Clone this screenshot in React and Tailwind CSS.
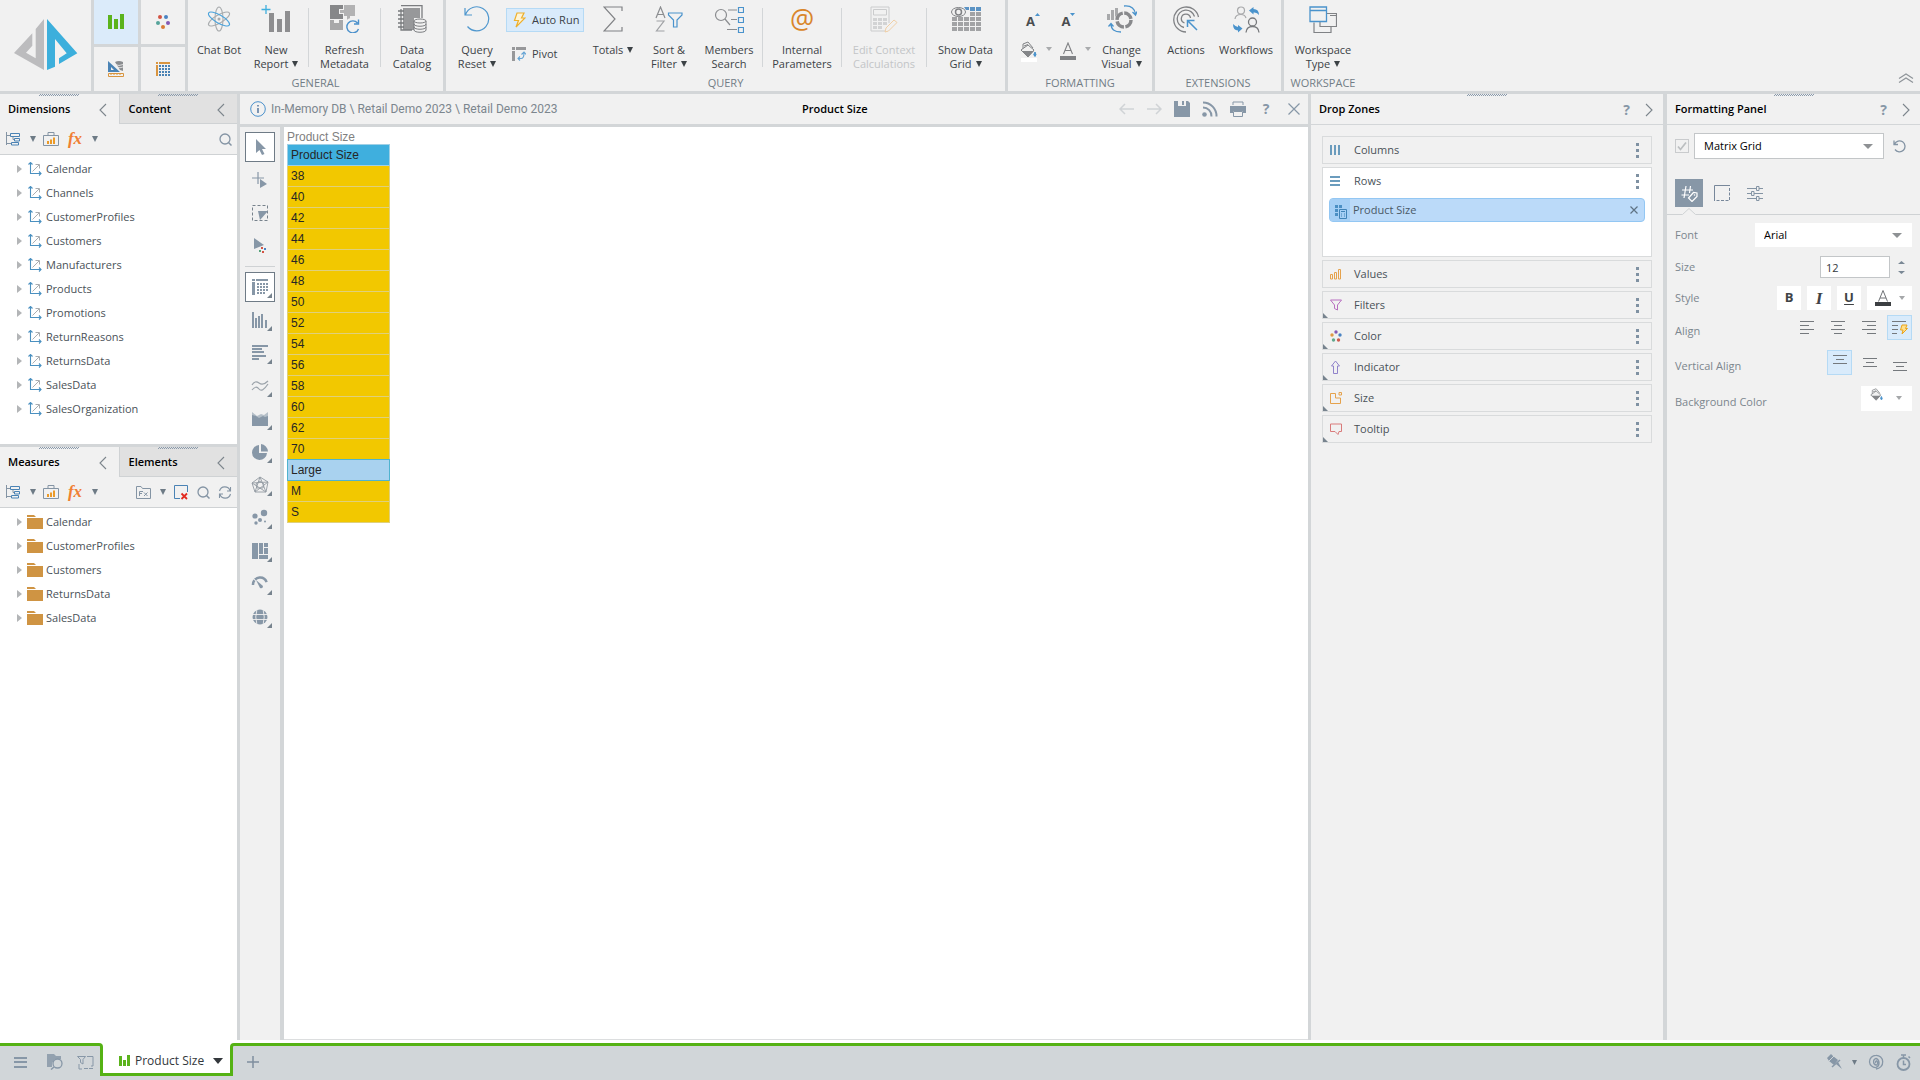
import React from 'react';

const dimensions = [
    'Calendar', 'Channels', 'CustomerProfiles', 'Customers', 'Manufacturers', 'Products',
    'Promotions', 'ReturnReasons', 'ReturnsData', 'SalesData', 'SalesOrganization',
];
const measures = ['Calendar', 'CustomerProfiles', 'Customers', 'ReturnsData', 'SalesData'];
const sizes = ['38', '40', '42', '44', '46', '48', '50', '52', '54', '56', '58', '60', '62', '70', 'Large', 'M', 'S'];

/* ---------- small shared pieces ---------- */

const Svg = ({ w = 16, h = w, vb, className = '', children, ...rest }) => (
    <svg width={w} height={h} viewBox={vb || `0 0 ${w} ${h}`} fill="none" className={`shrink-0 ${className}`} aria-hidden="true" {...rest}>
        {children}
    </svg>
);

const Caret = ({ w = 7, h = 5, className = '' }) => (
    <Svg w={w} h={h} vb="0 0 8 6" className={className} preserveAspectRatio="none">
        <path d="M0 0H8L4 6Z" fill="currentColor" />
    </Svg>
);

const Grip = () => (
    <div className="absolute top-0 left-1/2 -translate-x-1/2 w-10 h-[2px] bg-[repeating-conic-gradient(#8a9aab_0_25%,transparent_0_50%)] bg-[length:2px_2px]"></div>
);

const Chevron = ({ right }) => (
    <Svg w={8} h={14}>
        <path d={right ? 'M1 1L7 7L1 13' : 'M7 1L1 7L7 13'} stroke="#7c858c" strokeWidth="1.1" />
    </Svg>
);

const Sep = () => <div className="w-px h-[59px] mt-2 bg-[#d3d6d8]"></div>;

const RibbonItem = ({ icon, lines, caret, width, disabled }) => (
    <button disabled={disabled} className={`${width} flex flex-col items-center pt-[5px] ${disabled ? 'text-[#c3c5c7]' : 'text-[#3c4246]'}`}>
        <span className="h-7 mb-[10px] flex items-center justify-center">{icon}</span>
        {lines.map((l, i) => (
            <span key={l} className="text-[11px] leading-[14px] whitespace-nowrap">
                {l}
                {caret && i === lines.length - 1 && <Caret w={6} h={6} className="inline-block ml-1 align-[1px]" />}
            </span>
        ))}
    </button>
);

const RibbonGroup = ({ label, width, pad = '', children }) => (
    <section className={`${width} flex flex-col h-[91px] shrink-0`}>
        <div className={`flex h-[76px] ${pad}`}>{children}</div>
        <h2 className="text-[11px] leading-[14px] text-center text-[#727d86]">{label}</h2>
    </section>
);

/* ---------- ribbon icons ---------- */

const ChatBotIcon = () => (
    <Svg w={26}>
        <g strokeWidth="1.1">
            <ellipse cx="13" cy="13" rx="4" ry="12" stroke="#a9acae" />
            <ellipse cx="13" cy="13" rx="4" ry="12" stroke="#a9acae" transform="rotate(60 13 13)" />
            <ellipse cx="13" cy="13" rx="4" ry="12" stroke="#4aa3dc" transform="rotate(-60 13 13)" />
        </g>
        <circle cx="13" cy="13" r="1.5" fill="#a9acae" />
    </Svg>
);

const NewReportIcon = () => (
    <Svg w={30} h={28}>
        <path d="M5 0V9M0.500 4.500H9.500" stroke="#3fafde" strokeWidth="1.300" />
        <path d="M8 8H13V27H8ZM16 14H21V27H16ZM24 6H29V27H24Z" fill="#8e8e90" />
    </Svg>
);

const RefreshIcon = () => (
    <Svg w={30} h={28}>
        <path d="M0 0H13V4H9V9H13V14H0Z" fill="#868789" />
        <path d="M14 0H25V11H20V15H17V11H14V8H10V5H14Z" fill="#b2b2b3" />
        <path d="M0 15H4V18H9V15H13V25H0Z" fill="#a8a8a9" />
        <circle cx="22" cy="21" r="8" fill="#f1f1f1" />
        <path d="M27.500 18A6 6 0 1 0 28.500 24M28.500 14.500V19H24" stroke="#4a90cb" strokeWidth="1.400" />
    </Svg>
);

const CatalogIcon = () => (
    <Svg w={29} h={28}>
        <path d="M5 3H22V13H16V25H5Z" fill="#97989a" />
        <path d="M3 0.500H24V13M3 4V25H14" stroke="#7b7d80" strokeWidth="1.300" />
        <path d="M0 6H6M0 10H6M0 14H6M0 18H6M0 22H6" stroke="#77797c" strokeWidth="1.300" />
        <path d="M16 16V25C16 28 28 28 28 25V16M16 19C16 22 28 22 28 19M16 22C16 25 28 25 28 22" stroke="#7b7d80" fill="#f1f1f1" />
        <ellipse cx="22" cy="16" rx="6" ry="2" stroke="#7b7d80" fill="#f1f1f1" />
    </Svg>
);

const ResetIcon = () => (
    <Svg w={26}>
        <path d="M1 2V9H8M1.500 8.500A12 12 0 1 1 3.500 20.500" stroke="#4f97ce" strokeWidth="1.200" />
    </Svg>
);

const Bolt = ({ w = 13, h = 16 }) => (
    <Svg w={w} h={h} vb="0 0 13 16">
        <path d="M4 1H11L8.500 6H12L3 15L5.500 8.500H1.500Z" stroke="#eeb02c" strokeWidth="1.200" fill="#fff4d4" />
    </Svg>
);

const PivotIcon = () => (
    <Svg w={14}>
        <path d="M0 0H3V3H0ZM4 0H14V3H4ZM0 4H3V14H0Z" fill="#97989a" />
        <path d="M6 11.500H9Q12 11.500 12 6M9.500 7.500L12 5L14 7.500M8 9.500L6 11.500L8 13.500" stroke="#63a3d4" strokeWidth="1.100" />
    </Svg>
);

const SumIcon = () => (
    <Svg w={20} h={26}>
        <path d="M19 5V1H1L12 13L1 25H19V21" stroke="#808285" strokeWidth="1.200" />
    </Svg>
);

const SortIcon = () => (
    <Svg w={28} h={26}>
        <path d="M1 12L5.500 1L10 12M2.500 8.500H8.500" stroke="#8b8d90" strokeWidth="1.200" />
        <path d="M1.500 15H9L1.500 25H9.500" stroke="#a0a2a5" strokeWidth="1.200" />
        <path d="M13.500 7H27V9L22 14V21H18.500V14L13.500 9Z" stroke="#4a93cc" strokeWidth="1.200" />
    </Svg>
);

const MembersIcon = () => (
    <Svg w={30} h={27}>
        <circle cx="7" cy="9" r="5.500" stroke="#8b8d90" strokeWidth="1.200" />
        <path d="M11 13L16 19M14 4H23M17 13.500H23M13 23.500H23" stroke="#8b8d90" strokeWidth="1.200" />
        <path d="M24.500 1.500H29.500V6.500H24.500ZM24.500 11.500H29.500V16.500H24.500ZM24.500 21.500H29.500V26.500H24.500Z" stroke="#4a93cc" strokeWidth="1.200" />
    </Svg>
);

const CalcIcon = () => (
    <Svg w={28} h={27}>
        <path d="M18 25H1V1H19V17" stroke="#cbcccd" />
        <path d="M3.500 3.500H16.500V9H3.500Z" stroke="#cbcccd" />
        <path d="M3 12H7V15H3ZM8 12H12V15H8ZM13 12H17V15H13ZM3 16H7V19H3ZM8 16H12V19H8ZM13 16H17V19H13ZM3 20H7V23H3ZM8 20H12V23H8Z" fill="#d2d3d4" />
        <path d="M15 26L16 22L24 14L27 16.500L18.500 25Z" stroke="#f0cfa6" fill="#f1f1f1" />
    </Svg>
);

const DataGridIcon = () => (
    <Svg w={30} h={26}>
        {[0, 1, 2, 3, 4].map(r => [0, 1, 2, 3, 4].map(col => (
            (r > 1 || col > 2) && <rect key={`${r}${col}`} x={col * 6 + 1} y={r * 5 + 1} width="5" height="4" fill={r === 0 ? '#5b93c4' : '#a2a3a5'} />
        )))}
        <path d="M13 1H18V4H15Z" fill="#5b93c4" />
        <ellipse cx="7.500" cy="6" rx="7" ry="4.500" stroke="#808285" fill="#f1f1f1" />
        <circle cx="7.500" cy="6" r="3" stroke="#808285" strokeWidth="1.500" />
    </Svg>
);

const ChangeVisualIcon = () => (
    <Svg w={30} h={28}>
        <path d="M0 9H3V15H0ZM4 5H7V15H4ZM8 3H11V9L8 12Z" fill="#a8a9ab" />
        <circle cx="17" cy="15" r="7" stroke="#88898c" strokeWidth="3.500" strokeDasharray="9.500 1.500" />
        <path d="M17 1Q27 0 28.500 9M25.500 7L28.500 10L30 6.500M14 27Q4 27 4 19M1.500 21.500L4 18.500L6.500 21.500" stroke="#4a93cc" strokeWidth="1.300" />
    </Svg>
);

const ActionsIcon = () => (
    <Svg w={27}>
        <path d="M13 26A12.500 12.500 0 1 1 25.500 11M11 21.500A8.800 8.800 0 1 1 21.500 10.500M11.500 17A4.600 4.600 0 1 1 17.500 12" stroke="#808285" strokeWidth="1.300" />
        <path d="M24 24L15 15M14.500 21V14.500H21.500" stroke="#4a93cc" strokeWidth="1.500" />
    </Svg>
);

const WorkflowsIcon = () => (
    <Svg w={27} h={27}>
        <circle cx="8" cy="4.500" r="3.500" stroke="#a8a9ab" strokeWidth="1.200" />
        <path d="M2 13Q2.500 8.500 8 8.500Q12 8.500 13 12" stroke="#a8a9ab" strokeWidth="1.200" />
        <circle cx="19.500" cy="16" r="4" stroke="#77797c" strokeWidth="1.300" />
        <path d="M13 26.500Q13.500 20.500 19.500 20.500Q25.500 20.500 26 26.500" stroke="#77797c" strokeWidth="1.300" />
        <path d="M16 4.500L20.500 1V3Q26 3 26 9Q24 6 20.500 6.500V8.500ZM9.500 22.500L5 19V21Q3 21 0 18Q0 24.500 5 24.500V26.500Z" fill="#4a93cc" />
    </Svg>
);

const WorkspaceIcon = () => (
    <Svg w={28} h={27}>
        <path d="M18 7.500H27.500V20.500H11V16M21 9.500H27M5 16.500V26.500H22V21" stroke="#808285" strokeWidth="1.200" />
        <path d="M1 1H17.500V15.500H1ZM1 4.500H17.500" stroke="#4a93cc" strokeWidth="1.300" />
    </Svg>
);

const BucketIcon = ({ w = 17, h = 17 }) => (
    <Svg w={w} h={h} vb="0 0 17 17">
        <path d="M3 8V3L8 1L13 7M4 5L8 3.500" stroke="#808285" />
        <path d="M1 9L8 4L14 9L8 16Z" stroke="#808285" fill="#f1f1f1" />
        <path d="M2 10H14L8 16Z" fill="#85878a" />
        <path d="M15 11Q17 14 15 15.500Q12.500 14 15 11" fill="#4a93cc" stroke="#4a93cc" />
    </Svg>
);

/* ---------- ribbon ---------- */

const Ribbon = () => (
    <header className="flex shrink-0 bg-[#f1f1f1] border-b-[3px] border-[#d3d6d8]">
        <div className="w-[94px] h-[91px] shrink-0 border-r-[3px] border-[#d3d6d8] flex items-start pl-[13px] pt-[18px]">
            <Svg w={65} h={53}>
                <path d="M31 1L22.700 11V40.300L13 34.700L19.300 27.700V15.300L1 35L31 52Z" fill="#bcbcbe" />
                <path d="M34 1L64.300 35.300L46 46V40.300L53.700 35.300L42 21V48.700L34 52Z" fill="#3cafdc" />
            </Svg>
        </div>
        <nav className="grid grid-cols-[44px_44px] grid-rows-[44px_44px] gap-[3px] bg-[#d3d6d8] border-r-[3px] border-[#d3d6d8] shrink-0">
            <button aria-label="Discover" className="bg-[#dbebfa] flex items-center justify-center">
                <Svg w={16}><path d="M0 1H4V15H0ZM6 5H10V15H6ZM12 0H16V15H12Z" fill="#5bb31c" /></Svg>
            </button>
            <button aria-label="Present" className="bg-[#f1f1f1] flex items-center justify-center">
                <Svg w={14}>
                    <circle cx="4" cy="2" r="2" fill="#d35444" /><circle cx="10" cy="2" r="2" fill="#4a83c3" />
                    <circle cx="2" cy="8" r="2" fill="#56a39a" /><circle cx="12" cy="8" r="2" fill="#8459b5" />
                    <circle cx="7" cy="12" r="2" fill="#d97b35" />
                </Svg>
            </button>
            <button aria-label="Model" className="bg-[#f1f1f1] flex items-center justify-center">
                <Svg w={16}>
                    <path d="M0 0V11H12ZM3 6L6 9H3Z" fill="#4a83b5" fillRule="evenodd" />
                    <path d="M7 1Q11 -1 15 1V10L12 9Z" fill="#8a8c8f" />
                    <path d="M7 3.500Q11 5.500 15 3.500M9 6Q12 7.500 15 6" stroke="#f1f1f1" strokeWidth="0.800" />
                    <path d="M0.500 12.500H15.500V15.500H0.500ZM3 12V14M6 12V14M9 12V14M12 12V14" stroke="#d9953f" />
                </Svg>
            </button>
            <button aria-label="Tabulate" className="bg-[#f1f1f1] flex items-center justify-center">
                <Svg w={14}>
                    <path d="M0 0H2V2H0ZM3 0H14V2H3ZM0 3H2V14H0Z" fill="#d9953f" />
                    {[3, 6, 9, 12].map(x => [3, 6, 9, 12].map(y => <rect key={`${x}-${y}`} x={x} y={y} width="2" height="2" fill="#4a83b5" />))}
                </Svg>
            </button>
        </nav>

        <div className="flex flex-1 divide-x-[3px] divide-[#d3d6d8]">
            <RibbonGroup label="GENERAL" width="w-[258px]" pad="pl-[6px]">
                <RibbonItem width="w-[50px]" icon={<ChatBotIcon />} lines={['Chat Bot']} />
                <RibbonItem width="w-16" icon={<NewReportIcon />} lines={['New', 'Report']} caret />
                <Sep />
                <RibbonItem width="w-[71px]" icon={<RefreshIcon />} lines={['Refresh', 'Metadata']} />
                <Sep />
                <RibbonItem width="w-[62px]" icon={<CatalogIcon />} lines={['Data', 'Catalog']} />
            </RibbonGroup>
            <RibbonGroup label="QUERY" width="w-[562px]" pad="pl-1">
                <RibbonItem width="w-[54px]" icon={<ResetIcon />} lines={['Query', 'Reset']} caret />
                <div className="w-[78px] ml-[2px] pt-2 flex flex-col gap-[10px] text-[11px] text-[#3c4246]">
                    <button className="h-6 flex items-center gap-[6px] pl-[6px] bg-[#d9ebfb] border border-[#b5daf5] whitespace-nowrap"><Bolt />Auto Run</button>
                    <button className="h-6 flex items-center gap-[6px] pl-[6px]"><PivotIcon />Pivot</button>
                </div>
                <RibbonItem width="w-[58px]" icon={<SumIcon />} lines={['Totals']} caret />
                <RibbonItem width="w-[54px]" icon={<SortIcon />} lines={['Sort &', 'Filter']} caret />
                <RibbonItem width="w-[66px]" icon={<MembersIcon />} lines={['Members', 'Search']} />
                <Sep />
                <RibbonItem width="w-[78px]" icon={<span className="text-[27px] leading-7 text-[#d9862b]">@</span>} lines={['Internal', 'Parameters']} />
                <Sep />
                <RibbonItem width="w-[84px]" icon={<CalcIcon />} lines={['Edit Context', 'Calculations']} disabled />
                <Sep />
                <RibbonItem width="w-[77px]" icon={<DataGridIcon />} lines={['Show Data', 'Grid']} caret />
            </RibbonGroup>
            <RibbonGroup label="FORMATTING" width="w-[147px]">
                <div className="grid grid-cols-2 w-[83px] pl-3 pt-[7px] content-start text-[#4a4d50]">
                    <button aria-label="Increase font" className="h-7 flex items-start pl-[6px] pt-1">
                        <b className="text-[13px] leading-5">A</b>
                        <Svg w={5} h={5} className="mt-[2px]"><path d="M0 3L2.500 0L5 3Z" fill="#4a93cc" /></Svg>
                    </button>
                    <button aria-label="Decrease font" className="h-7 flex items-start pl-[6px] pt-1">
                        <b className="text-[13px] leading-5">A</b>
                        <Svg w={5} h={5} className="mt-[2px]"><path d="M0 0L2.500 3L5 0Z" fill="#4a93cc" /></Svg>
                    </button>
                    <button aria-label="Fill color" className="h-7 flex items-center gap-[9px] text-[#a9abad]">
                        <span className="flex flex-col items-center pt-1"><BucketIcon /><i className="w-4 h-1 bg-white"></i></span>
                        <Caret w={6} h={4} />
                    </button>
                    <button aria-label="Text color" className="h-7 flex items-center justify-end gap-[9px] text-[#a9abad]">
                        <span className="flex flex-col items-center pt-1 text-[#808285]">
                            <Svg w={12} h={14}><path d="M1.500 12L6 1L10.500 12M3 8.500H9" stroke="currentColor" strokeWidth="1.100" /></Svg>
                            <i className="w-4 h-1 bg-[#808285]"></i>
                        </span>
                        <Caret w={6} h={4} />
                    </button>
                </div>
                <RibbonItem width="w-[61px]" icon={<ChangeVisualIcon />} lines={['Change', 'Visual']} caret />
            </RibbonGroup>
            <RibbonGroup label="EXTENSIONS" width="w-[129px]">
                <RibbonItem width="w-[62px]" icon={<ActionsIcon />} lines={['Actions']} />
                <RibbonItem width="w-[58px]" icon={<WorkflowsIcon />} lines={['Workflows']} />
            </RibbonGroup>
            <RibbonGroup label="WORKSPACE" width="w-[78px]">
                <RibbonItem width="w-[78px]" icon={<WorkspaceIcon />} lines={['Workspace', 'Type']} caret />
            </RibbonGroup>
        </div>
        <button aria-label="Collapse ribbon" className="self-end mr-[6px] mb-2">
            <Svg w={16} h={10}><path d="M1 5.500L8 1L15 5.500M1 9.500L8 5L15 9.500" stroke="#8e9499" strokeWidth="1.200" /></Svg>
        </button>
    </header>
);

/* ---------- left panels ---------- */

const SearchIcon = () => (
    <Svg w={13}>
        <circle cx="6" cy="6" r="5" stroke="#8494a4" strokeWidth="1.300" />
        <path d="M9.500 9.500L12.500 12.500" stroke="#8494a4" strokeWidth="1.500" />
    </Svg>
);

const TreeTools = () => (
    <>
        <button aria-label="Hierarchies">
            <Svg w={14}>
                <path d="M0.500 0V13M0.500 3.500H5M0.500 11.500H5M7 5V7.500H8" stroke="#8494a4" />
                <path d="M4.500 1.500H13.500V4.500H4.500ZM8.500 6.500H13.500V9H8.500ZM5.500 10.500H12.500V13H5.500Z" stroke="#4a83b5" />
            </Svg>
        </button>
        <Caret w={6} h={6} className="ml-[10px] text-[#6e7b86]" />
        <button aria-label="Insert" className="ml-[7px]">
            <Svg w={16} h={14}>
                <path d="M0.500 3.500H15.500V13.500H0.500ZM5 3V0.500H11V3" stroke="#8494a4" />
                <path d="M4 9H6V12H4ZM7 7.500H9V12H7ZM10 5.500H12V12H10Z" fill="#eb9a28" />
            </Svg>
        </button>
        <button aria-label="Formula" className="ml-2 w-4 font-['Liberation_Serif',serif] italic font-bold text-[17px] leading-6 text-[#f08033]">fx</button>
        <Caret w={6} h={6} className="ml-[9px] text-[#6e7b86]" />
    </>
);

const TreePanel = ({ title, other, items, icon, tools, className }) => (
    <section className={`flex flex-col min-h-0 ${className}`}>
        <div className="grid grid-cols-2 h-[30px] bg-[#f1f1f1] text-[11px] text-black">
            <div className="relative flex items-center justify-between pt-px pl-2 pr-3 font-semibold">
                <Grip />{title}<button aria-label={`Collapse ${title}`}><Chevron /></button>
            </div>
            <div className="relative flex items-center justify-between pt-[2px] pl-[9px] pr-3 font-semibold bg-[#e1e1e1] border-l border-b border-[#cfd2d4]">
                <Grip />{other}<button aria-label={`Collapse ${other}`}><Chevron /></button>
            </div>
        </div>
        <div className="flex items-center h-[31px] pl-[6px] pr-[5px] bg-[#f1f1f1] border-b border-[#cfd2d4]">
            <TreeTools />
            <div className="flex items-center ml-auto">
                {tools}
                {!tools && <button aria-label="Search"><SearchIcon /></button>}
            </div>
        </div>
        <ul className="py-[2px]">
            {items.map(name => (
                <li key={name}>
                    <button className="flex items-center h-6 w-full pl-[17px] text-[11px] text-[#4a5258]">
                        <Svg w={5} h={8}><path d="M0 0L5 4L0 8Z" fill="#b3b5b7" /></Svg>
                        <span className="w-6 flex justify-center pl-[2px] pb-px">{icon}</span>
                        {name}
                    </button>
                </li>
            ))}
        </ul>
    </section>
);

const AxisIcon = () => (
    <Svg w={14}>
        <path d="M2.500 0.500V11.500H13M0.500 2.500L2.500 0.500L4.500 2.500M11 9.500L13 11.500L11 13.500" stroke="#4a90c0" strokeWidth="1.100" />
        <path d="M4.500 9.500L11 3M7.500 2.500H11.500V6.500" stroke="#aaadb0" />
    </Svg>
);

const FolderIcon = () => (
    <Svg w={16} h={14} className="mt-px"><path d="M0 0H7L9 2H0ZM0 3H16V14H0Z" fill="#cf9443" /></Svg>
);

const measureTools = (
    <>
        <button aria-label="Folder functions">
            <Svg w={15} h={13}>
                <path d="M0.500 12.500V0.500H5L6.500 2.500H14.500V12.500ZM3.500 10V5.500H7M3.500 7.500H6M8 6.500L11.500 10M11.500 6.500L8 10" stroke="#8494a4" />
            </Svg>
        </button>
        <Caret w={6} h={6} className="ml-[9px] text-[#6e7b86]" />
        <button aria-label="Clear" className="ml-2">
            <Svg w={14} h={15}>
                <path d="M6 13.500H0.500V0.500H13.500V7" stroke="#4a83b5" />
                <path d="M7.500 8.500L13 14M13 8.500L7.500 14" stroke="#e22b20" strokeWidth="1.800" />
            </Svg>
        </button>
        <button aria-label="Search" className="ml-[9px]"><SearchIcon /></button>
        <button aria-label="Refresh" className="ml-2">
            <Svg w={14} h={13}>
                <path d="M1.500 5A5.500 5.500 0 0 1 12 4.500M12.500 8A5.500 5.500 0 0 1 2 8.500M12.500 1V5H9M1.500 12V8H5" stroke="#8494a4" strokeWidth="1.100" />
            </Svg>
        </button>
    </>
);

/* ---------- center ---------- */

const c = '#8797a7';
const tools = [
    { name: 'Pointer', on: true, icon: <path d="M5 1L15 11H11L13.500 16L11 17L8.500 12L5 15Z" fill={c} /> },
    { name: 'Cross select', icon: <><path d="M7 1V13M1 7H13" stroke={c} strokeWidth="1.200" /><path d="M9 8L16 13L9 17Z" fill={c} /></> },
    { name: 'Lasso', icon: <><path d="M1.500 1.500H16.500V16.500H1.500Z" stroke="#77828c" strokeDasharray="3 2" /><path d="M7 7H17L9 16Z" fill={c} /></> },
    { name: 'Point select', icon: <><path d="M3 1L13 8L3 12Z" fill={c} /><path d="M10 10H12V12H10ZM11 14H13V16H11Z" fill="#d35444" /><path d="M13 11H15V13H13Z" fill="#4a83c3" /><path d="M8 13H10V15H8Z" fill="#56a37a" /></>, line: true },
    { name: 'Grid', on: true, more: true, icon: <path d="M1 1H4V3H1ZM5 1H17V3H5ZM1 4H4V17H1Z M6 5h2v2h-2zM9 5h2v2h-2zM12 5h2v2h-2zM15 5h2v2h-2zM6 8h2v2h-2zM9 8h2v2h-2zM12 8h2v2h-2zM15 8h2v2h-2zM6 11h2v2h-2zM9 11h2v2h-2zM12 11h2v2h-2zM15 11h2v2h-2zM6 14h2v2h-2zM9 14h2v2h-2zM12 14h2v2h-2z" fill={c} /> },
    { name: 'Column chart', more: true, icon: <path d="M1 1H3V17H1ZM4 7H6V17H4ZM7 5H9V17H7ZM10 3H12V17H10ZM14 9H16V17H14Z" fill={c} /> },
    { name: 'Bar chart', more: true, icon: <path d="M1 1H17V3H1ZM1 4H11V6H1ZM1 7H13V9H1ZM1 11H15V13H1ZM1 14H8V16H1Z" fill={c} /> },
    { name: 'Line chart', more: true, icon: <path d="M1 8Q4 3 8 6T17 4M1 13Q5 8 8 12T17 7" stroke="#9ba3aa" strokeWidth="1.200" /> },
    { name: 'Area chart', more: true, icon: <><path d="M1 2L6 6L10 4L13 5L17 2V10H1Z" fill="#b5bfc8" /><path d="M1 5L5 6L8 8L12 6L14 7L17 6V16H1Z" fill={c} /></> },
    { name: 'Pie chart', more: true, icon: <path d="M8 2A7.500 7.500 0 1 0 16 10H8ZM10 1A8 8 0 0 1 17 8.500H10Z" fill={c} /> },
    { name: 'Radar', more: true, icon: <path d="M9 1L17 6L15 16H4L1 7ZM9 1L4 16M9 1L15 16M1 7L15 16M17 6L4 16M1 7L17 6M9 5L13 8L12 12H6L5 8Z" stroke="#939ba3" strokeWidth="0.900" /> },
    { name: 'Scatter', more: true, icon: <g fill={c}><circle cx="13" cy="4" r="3.200" /><circle cx="4" cy="7" r="2.600" /><circle cx="9" cy="11" r="2" /><circle cx="5" cy="14" r="1.700" /><circle cx="14" cy="12.500" r="1" /></g> },
    { name: 'Treemap', more: true, icon: <path d="M1 1H7V17H1ZM8 1H12V12H8ZM13 1H17V5H13ZM13 6H17V12H13ZM8 13H17V17H8Z" fill={c} /> },
    { name: 'Gauge', more: true, icon: <><path d="M2 10A7 7 0 0 1 16 9" stroke={c} strokeWidth="2.500" strokeDasharray="5 1 14" /><path d="M5 5L12 11Q12 14 9 13Z" fill={c} /></> },
    { name: 'Map', more: true, icon: <><circle cx="9" cy="9" r="7.500" fill={c} /><path d="M1 6.500H17M1 11.500H17M6 1Q3.500 9 6 17M12 1Q14.500 9 12 17" stroke="#f1f1f1" strokeWidth="0.900" /></> },
];

const ToolStrip = () => (
    <div className="w-11 shrink-0 bg-[#f1f1f1] border-r-4 border-[#d3d6d8] flex flex-col items-center gap-[3px] pt-[5px]">
        {tools.map(t => (
            <React.Fragment key={t.name}>
                <button aria-label={t.name} className={`relative size-[30px] shrink-0 flex items-center justify-center border ${t.on ? 'bg-white border-[#6f7b86]' : 'border-transparent'}`}>
                    <Svg w={18}>{t.icon}</Svg>
                    {t.more && <Svg w={5} className="absolute right-[2px] bottom-[3px]"><path d="M5 0V5H0Z" fill="#77838e" /></Svg>}
                </button>
                {t.line && <div className="w-[30px] h-px my-[2px] bg-[#cfd2d4]"></div>}
            </React.Fragment>
        ))}
    </div>
);

const HeadButton = ({ label, children }) => (
    <button aria-label={label} className="w-7 h-[30px] flex items-center justify-center">{children}</button>
);

const CenterHeader = () => (
    <div className="flex items-center h-[33px] bg-[#f1f1f1] border-b-[3px] border-[#d3d6d8] pl-[10px]">
        <Svg w={16}>
            <circle cx="8" cy="8" r="7.300" stroke="#4a90cb" />
            <path d="M8 7V12M8 4V5.500" stroke="#4a6f9b" strokeWidth="1.400" />
        </Svg>
        <span className="ml-[5px] text-xs font-[Roboto,sans-serif] text-[#7c868e] whitespace-pre">In-Memory DB \ Retail Demo 2023 \ Retail Demo 2023</span>
        <h1 className="flex-1 pt-px text-center text-[11px] font-semibold text-black">Product Size</h1>
        <HeadButton label="Back"><Svg w={15} h={12}><path d="M15 6H1M6 1L1 6L6 11" stroke="#d0d3d6" strokeWidth="1.500" /></Svg></HeadButton>
        <HeadButton label="Forward"><Svg w={15} h={12}><path d="M0 6H14M9 1L14 6L9 11" stroke="#d0d3d6" strokeWidth="1.500" /></Svg></HeadButton>
        <HeadButton label="Save"><Svg w={16}><path d="M0 0H4V5H12V0H14L16 2V16H0ZM8 0H10V4H8Z" fill={c} /></Svg></HeadButton>
        <HeadButton label="Subscribe">
            <Svg w={16}><circle cx="2.500" cy="13.500" r="2.300" fill={c} /><path d="M1 6.500A8.500 8.500 0 0 1 9.500 15.500M1 1.500A13.500 13.500 0 0 1 14.500 15.500" stroke={c} strokeWidth="2" /></Svg>
        </HeadButton>
        <HeadButton label="Print">
            <Svg w={16}><path d="M3 4V1H13V4" stroke={c} /><path d="M0 5H16V12H13V10H3V12H0Z" fill={c} /><path d="M3.500 10.500H12.500V15.500H3.500Z" stroke={c} /></Svg>
        </HeadButton>
        <HeadButton label="Help"><span className="text-sm font-bold text-[#8797a7]">?</span></HeadButton>
        <HeadButton label="Close"><Svg w={12}><path d="M0.500 0.500L11.500 11.500M11.500 0.500L0.500 11.500" stroke={c} strokeWidth="1.200" /></Svg></HeadButton>
    </div>
);

const Report = () => (
    <div className="flex-1 min-w-0 bg-white border-b border-[#dcdedf] pl-[3px] pt-[3px] font-['Liberation_Sans',Arial,sans-serif] text-xs">
        <div className="h-[14px] leading-[14px] text-[#808080]">Product Size</div>
        <table className="w-[103px] border-collapse text-[#262626]">
            <thead>
                <tr><th className="h-[21px] p-0 pl-[3px] text-left font-normal bg-[#3fafde] border border-[#9fd0e6]">Product Size</th></tr>
            </thead>
            <tbody>
                {sizes.map(s => (
                    <tr key={s}>
                        <td className={`h-[21px] p-0 pl-[3px] ${s === 'Large' ? 'bg-[#a9d2ef] border border-double border-[#4fb3cf]' : 'bg-[#f2c800] border border-[#dfd07c]'}`}>{s}</td>
                    </tr>
                ))}
            </tbody>
        </table>
    </div>
);

/* ---------- right panels ---------- */

const PanelTitle = ({ children }) => (
    <div className="relative flex items-center h-[31px] shrink-0 border-b border-[#d3d6d8] pt-px pl-2 pr-[10px]">
        <Grip />
        <h2 className="flex-1 text-[11px] font-semibold text-black">{children}</h2>
        <button aria-label="Help" className="mr-[15px] text-sm leading-5 font-bold text-[#8797a7]">?</button>
        <button aria-label="Collapse panel"><Chevron right /></button>
    </div>
);

const zones = [
    { name: 'Columns', icon: <path d="M0 1H2V11H0ZM4 1H6V11H4ZM8 1H10V11H8Z" fill="#6b9cbd" /> },
    { name: 'Rows', icon: <path d="M0 1H10V3H0ZM0 5H10V7H0ZM0 9H10V11H0Z" fill="#6b9cbd" /> },
    { name: 'Values', icon: <path d="M0.500 6.500H2.500V11H0.500ZM4.500 4.500H6.500V11H4.500ZM8.500 1.500H10.500V11H8.500Z" stroke="#e5a24c" /> },
    { name: 'Filters', corner: true, icon: <path d="M0.500 1H11.500L7.500 6V11L4.500 9.500V6Z" stroke="#b86fc0" /> },
    { name: 'Color', corner: true, icon: <><circle cx="6" cy="2" r="1.700" fill="#8459b5" /><circle cx="2" cy="5" r="1.700" fill="#e09a45" /><circle cx="10" cy="5" r="1.700" fill="#4a83c3" /><circle cx="3.500" cy="10" r="1.700" fill="#62a88e" /><circle cx="8.500" cy="10" r="1.700" fill="#cf5c4f" /></> },
    { name: 'Indicator', corner: true, icon: <path d="M5.500 0L9.500 5H7.500V12.500H3.500V5H1.500Z" stroke="#9183cb" /> },
    { name: 'Size', corner: true, icon: <path d="M0.500 1.500H5.500V6H10.500V11.500H0.500ZM9 0.500H11.500V3H9Z" stroke="#e5a24c" /> },
    { name: 'Tooltip', corner: true, icon: <path d="M0.500 1H11.500V8.500H9L8 11.500L5 8.500H0.500Z" stroke="#d97b7b" /> },
];

const DropZones = () => (
    <aside className="w-[352px] shrink-0 flex flex-col bg-[#f1f1f1]">
        <PanelTitle>Drop Zones</PanelTitle>
        <div className="flex flex-col gap-[3px] px-[11px] pt-[11px]">
            {zones.map(z => (
                <section key={z.name} className={`relative border border-[#d9dbdc] ${z.name === 'Rows' ? 'bg-white h-[90px]' : 'h-7'}`}>
                    <div className="flex items-center h-[26px] pl-[7px]">
                        <Svg w={12} h={13}>{z.icon}</Svg>
                        <h3 className="ml-3 pt-px flex-1 text-[11px] text-[#4a5258]">{z.name}</h3>
                        <button aria-label={`${z.name} options`} className="w-7 flex justify-center">
                            <Svg w={3} h={15}><path d="M0 0H3V3H0ZM0 6H3V9H0ZM0 12H3V15H0Z" fill="#7f91a2" /></Svg>
                        </button>
                    </div>
                    {z.name === 'Rows' && (
                        <div className="flex items-center h-6 mx-[6px] mt-1 rounded-[4px] bg-[#bbdaf9] border border-[#93c7f3] overflow-hidden">
                            <span className="w-5 h-full pl-[2px] pt-1 bg-[#a5cff5] flex items-center justify-center">
                                <Svg w={12} h={14}>
                                    <path d="M0 0H3V3H0ZM4 0H7V3H4ZM0 4H3V7H0ZM0 8H3V11H0Z" fill="#4a8fc4" />
                                    <path d="M4.500 4.500H11.500V13.500H4.500ZM6 6.500H10M6 9H7M9 9H10M6 11H7M9 11H10" stroke="#3f83b8" />
                                </Svg>
                            </span>
                            <span className="flex-1 pl-[3px] pt-px text-[11px] text-[#4a5966]">Product Size</span>
                            <button aria-label="Remove Product Size" className="w-5 flex justify-center">
                                <Svg w={8}><path d="M0.500 0.500L7.500 7.500M7.500 0.500L0.500 7.500" stroke="#5f7384" strokeWidth="1.200" /></Svg>
                            </button>
                        </div>
                    )}
                    {z.corner && <Svg w={5} className="absolute left-0 bottom-0"><path d="M0 0V5H5Z" fill="#77838e" /></Svg>}
                </section>
            ))}
        </div>
    </aside>
);

const Lines = ({ widths, align = 'center', h = 14 }) => {
    const x = w => (align === 'left' ? 0 : align === 'right' ? 14 - w : (14 - w) / 2);
    return (
        <Svg w={14} h={h}>
            {widths.map((w, i) => <rect key={i} x={x(w)} y={i * 4} width={w} height="1" fill="#75797d" />)}
        </Svg>
    );
};

const FormatRow = ({ id, label, height, children }) => (
    <div className={`flex items-center ${height}`}>
        <label htmlFor={id} className="flex-1 text-[11px] text-[#7c868e]">{label}</label>
        {children}
    </div>
);

const Select = ({ id, label, value, className, caretClass }) => (
    <div className={`grid items-center ${className}`}>
        <select id={id} aria-label={label} defaultValue={value} className="col-start-1 row-start-1 w-full h-full appearance-none pl-[9px] text-[11px] text-black bg-white outline-none">
            <option>{value}</option>
        </select>
        <Caret w={10} h={5} className={`col-start-1 row-start-1 justify-self-end pointer-events-none text-[#8e9194] ${caretClass}`} />
    </div>
);

const FormattingPanel = () => (
    <aside className="w-[253px] shrink-0 flex flex-col bg-[#f1f1f1]">
        <PanelTitle>Formatting Panel</PanelTitle>
        <div className="flex items-center pl-2 pt-2 h-[34px]">
            <span className="grid place-items-center">
                <input type="checkbox" aria-label="Enabled" defaultChecked disabled className="col-start-1 row-start-1 appearance-none size-[14px] border border-[#c9cbcd]" />
                <Svg w={10} className="col-start-1 row-start-1 pointer-events-none"><path d="M1 5.500L3.500 8.500L9 1.500" stroke="#bcbfc1" strokeWidth="1.700" /></Svg>
            </span>
            <Select id="visual" label="Visual" value="Matrix Grid" className="ml-[5px] w-[190px] h-[26px] border border-[#c3c6c8]" caretClass="mr-[10px]" />
            <button aria-label="Reset" className="ml-[9px]">
                <Svg w={13}><path d="M1 0.500V4.500H5M1.500 4A5.500 5.500 0 1 1 2 9.500" stroke="#8494a4" strokeWidth="1.300" /></Svg>
            </button>
        </div>
        <div className="relative flex items-center gap-[17px] h-[56px] pt-[13px] pl-2 border-b border-[#cfd2d4]">
            <button aria-label="Format" className="size-7 bg-[#8797a7] flex items-center justify-center">
                <Svg w={17}>
                    <path d="M5 1L3 13M9.500 1L8.500 8M1 5H12M0.500 10H8" stroke="white" strokeWidth="1.200" />
                    <path d="M7.500 13L12.500 7.500L16 8V11.500L11 16.500Z" stroke="white" strokeWidth="1.200" />
                    <circle cx="13.500" cy="10" r="0.800" fill="white" />
                </Svg>
            </button>
            <button aria-label="Borders" className="-ml-[6px]">
                <Svg w={16}><path d="M0.500 16V0.500H16" stroke="#77879a" /><path d="M15.500 3V15.500H2" stroke="#77879a" strokeDasharray="3 1.500" /></Svg>
            </button>
            <button aria-label="Settings">
                <Svg w={16} h={15}>
                    <path d="M0 2.500H9M12 2.500H16M0 7.500H4M7 7.500H16M0 12.500H9M12 12.500H16M9.500 0.500H12V4.500H9.500ZM4.500 5.500H7V9.500H4.500ZM9.500 10.500H12V14.500H9.500Z" stroke="#8494a4" />
                </Svg>
            </button>
            <Svg w={14} h={7} className="absolute left-[15px] -bottom-px"><path d="M0 7L7 0L14 7Z" fill="#f1f1f1" /><path d="M0.500 6.500L7 0.500L13.500 6.500" stroke="#cfd2d4" /></Svg>
        </div>
        <div className="flex flex-col px-2 pt-[2px]">
            <FormatRow id="font" label="Font" height="h-9">
                <Select id="font" value="Arial" className="w-[157px] h-6" caretClass="mr-[10px]" />
            </FormatRow>
            <FormatRow id="size" label="Size" height="h-7">
                <input id="size" defaultValue="12" className="w-[70px] h-[22px] pl-[5px] text-[11px] text-[#33383c] bg-white border border-[#c3c6c8] outline-none" />
                <span className="flex flex-col gap-[7px] w-[22px] items-center text-[#7a8895]">
                    <button aria-label="Increase"><Svg w={7} h={3} className="block"><path d="M0 3L3.500 0L7 3Z" fill="currentColor" /></Svg></button>
                    <button aria-label="Decrease"><Svg w={7} h={3} className="block"><path d="M0 0L3.500 3L7 0Z" fill="currentColor" /></Svg></button>
                </span>
            </FormatRow>
            <FormatRow label="Style" height="h-[34px]">
                <div className="flex gap-[6px] text-[13px] text-[#404346]">
                    <button className="size-6 bg-white font-bold">B</button>
                    <button className="size-6 bg-white font-bold italic font-['Liberation_Serif',serif] text-[17px]">I</button>
                    <button className="size-6 bg-white font-bold underline underline-offset-2">U</button>
                    <button aria-label="Font color" className="w-[45px] h-6 bg-white flex items-center justify-center gap-2">
                        <span className="flex flex-col items-center">
                            <Svg w={12} h={12}><path d="M1.500 11.500L6 0.500L10.500 11.500M3 8H9" stroke="#707376" /></Svg>
                            <i className="w-4 h-1 bg-[#3c3f42]"></i>
                        </span>
                        <Caret w={6} h={4} className="text-[#a5a7a9]" />
                    </button>
                </div>
            </FormatRow>
            <FormatRow label="Align" height="h-[33px]">
                <div className="flex gap-[6px] -mt-2">
                    <button aria-label="Left" className="size-[25px] flex items-center justify-center"><Lines widths={[14, 9, 14, 9]} align="left" /></button>
                    <button aria-label="Center" className="size-[25px] flex items-center justify-center"><Lines widths={[14, 8, 14, 8]} /></button>
                    <button aria-label="Right" className="size-[25px] flex items-center justify-center"><Lines widths={[14, 9, 14, 9]} align="right" /></button>
                    <button aria-label="Auto" className="size-[25px] flex items-center justify-center bg-[#d9ebfb] border border-[#b5daf5]">
                        <Svg w={16} h={14}>
                            <path d="M0 0.500H14M0 4.500H6M0 8.500H6M0 12.500H5" stroke="#75797d" />
                            <path d="M10 4H15L13.500 7.500H15.500L10 13L11 9H8.500Z" stroke="#eaa41c" fill="#ffe08a" />
                        </Svg>
                    </button>
                </div>
            </FormatRow>
            <FormatRow label="Vertical Align" height="h-[37px]">
                <div className="flex gap-[5px] -mt-2">
                    <button aria-label="Top" className="size-[25px] flex items-start pt-1 justify-center bg-[#d9ebfb] border border-[#b5daf5]"><Lines widths={[14, 8, 14]} h={9} /></button>
                    <button aria-label="Middle" className="size-[25px] flex items-center justify-center"><Lines widths={[14, 8, 14]} h={9} /></button>
                    <button aria-label="Bottom" className="size-[25px] flex items-end pb-1 justify-center"><Lines widths={[14, 8, 14]} h={9} /></button>
                </div>
            </FormatRow>
            <FormatRow label="Background Color" height="h-[34px]">
                <button aria-label="Background color" className="w-[51px] h-[25px] -mt-2 bg-white flex items-start gap-[13px] pt-[2px] pl-[9px]">
                    <BucketIcon w={13} h={13} /><Caret w={6} h={4} className="mt-2 text-[#a5a7a9]" />
                </button>
            </FormatRow>
        </div>
    </aside>
);

/* ---------- footer ---------- */

const Footer = () => (
    <footer className="flex shrink-0 bg-white border-b-4 border-[#d1d6d9] mt-[3px]">
        <div className="w-[103px] h-[33px] shrink-0 flex items-center gap-[19px] pt-[2px] pl-[14px] bg-[#d1d6d9] border-t-[3px] border-r-[3px] border-[#55b214] rounded-tr-[4px]">
            <button aria-label="Menu"><Svg w={13} h={11}><path d="M0 0H13V2H0ZM0 4H13V6H0ZM0 9H13V11H0Z" fill={c} /></Svg></button>
            <button aria-label="Find content">
                <Svg w={17} h={16}>
                    <path d="M1 0H8L10 2H15V5H9L6 9V13H1Z" fill="#93a1af" />
                    <circle cx="11.500" cy="9.500" r="4.500" stroke={c} strokeWidth="1.300" /><path d="M8 13L5 15.500" stroke={c} strokeWidth="1.500" />
                </Svg>
            </button>
            <button aria-label="Filters panel" className="-ml-[5px]">
                <Svg w={17} h={15}>
                    <path d="M0.500 1.500H8.500L6 4.500V9L3.500 7.500V4.500ZM10 1.500H16V11H14M2 9V14H5M7 13.500H11M12 13.500H16" stroke={c} />
                </Svg>
            </button>
        </div>
        <div className="w-[127px] h-[33px] shrink-0 flex items-center bg-white border-b-[3px] border-[#55b214] pt-[5px] pl-4">
            <Svg w={11} h={11}><path d="M0 1H3V11H0ZM4 5H7V11H4ZM8 0H11V11H8Z" fill="#5bb31c" /></Svg>
            <button className="ml-[5px] flex items-center text-xs text-[#33383c] whitespace-nowrap">Product Size<Caret w={10} h={6} className="ml-[9px]" /></button>
        </div>
        <div className="flex-1 h-[33px] flex items-center bg-[#d1d6d9] border-t-[3px] border-l-[3px] border-[#55b214] rounded-tl-[4px] pt-[2px] pl-[14px] pr-[9px]">
            <button aria-label="Add tab"><Svg w={12}><path d="M6 0V12M0 6H12" stroke="#7f8f9f" strokeWidth="1.500" /></Svg></button>
            <button aria-label="Pin" className="ml-auto"><Svg w={16}><path d="M1 4L5 0L7 2L12 6L8 11L3 7Z M10 10L12 8L16 15Z" fill={c} /><path d="M2 8L8 2" stroke="#d1d6d9" /><path d="M6 13L14 6" stroke={c} strokeWidth="1.500" /></Svg></button>
            <Caret w={5} h={5} className="ml-[10px] text-[#6e7b86]" />
            <button aria-label="Tasks" className="ml-[11px]">
                <Svg w={16}><path d="M8 9A1.300 1.300 0 0 1 8.500 6.800A2.500 2.500 0 0 1 8.300 11.200A3.600 3.600 0 0 1 8 4.300A5 5 0 0 1 8 13.500A6 6 0 0 1 1.500 8A6.500 6.500 0 0 1 8 1.300A6.500 6.500 0 0 1 14.700 7.500A7 7 0 0 1 8 15" stroke={c} strokeWidth="1.300" /></Svg>
            </button>
            <button aria-label="Timer" className="ml-3">
                <Svg w={15} h={17}><circle cx="7.500" cy="10" r="6" stroke={c} strokeWidth="1.800" /><path d="M5 1H10M7.500 1V4M12.500 2.500L14 4M7.500 6.500V10.500H10" stroke={c} strokeWidth="1.500" /></Svg>
            </button>
        </div>
    </footer>
);

const App = () => (
    <div className="w-full h-screen flex flex-col bg-white overflow-hidden font-['Open_Sans','Noto_Sans',sans-serif]">
        <Ribbon />
        <main className="flex-1 min-h-0 flex">
            <div className="w-60 shrink-0 flex flex-col border-r-[3px] border-[#d3d6d8]">
                <TreePanel title="Dimensions" other="Content" items={dimensions} icon={<AxisIcon />} className="h-[353px] border-b-[3px] border-[#d3d6d8]" />
                <TreePanel title="Measures" other="Elements" items={measures} icon={<FolderIcon />} tools={measureTools} className="flex-1" />
            </div>
            <div className="flex-1 min-w-0 flex flex-col border-r-[3px] border-[#d3d6d8]">
                <CenterHeader />
                <div className="flex-1 min-h-0 flex">
                    <ToolStrip />
                    <Report />
                </div>
            </div>
            <DropZones />
            <div className="w-1 shrink-0 bg-[#d3d6d8]"></div>
            <FormattingPanel />
        </main>
        <Footer />
    </div>
);

export default App;
